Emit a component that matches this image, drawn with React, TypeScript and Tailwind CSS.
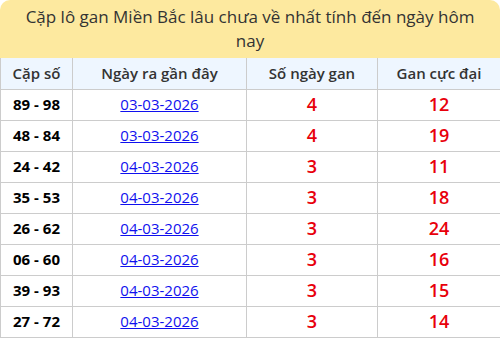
import React from "react";

const rows = [
  ["89 - 98", "03-03-2026", "4", "12"],
  ["48 - 84", "03-03-2026", "4", "19"],
  ["24 - 42", "04-03-2026", "3", "11"],
  ["35 - 53", "04-03-2026", "3", "18"],
  ["26 - 62", "04-03-2026", "3", "24"],
  ["06 - 60", "04-03-2026", "3", "16"],
  ["39 - 93", "04-03-2026", "3", "15"],
  ["27 - 72", "04-03-2026", "3", "14"],
];

export default function App() {
  return (
    <div
      className="w-[500px] h-[338px] bg-white overflow-hidden"
      style={{ fontFamily: '"Open Sans", "Noto Sans", sans-serif' }}
    >
      <div className="h-[58px] bg-[#fde99f] rounded-t-[10px] flex items-center justify-center px-4 text-center text-[17px] leading-[24px] font-medium text-[#333]">
        Cặp lô gan Miền Bắc lâu chưa về nhất tính đến ngày hôm nay
      </div>
      <table className="w-[500px] border-collapse table-fixed">
        <colgroup>
          <col className="w-[72px]" />
          <col className="w-[174px]" />
          <col className="w-[131px]" />
          <col className="w-[123px]" />
        </colgroup>
        <thead>
          <tr className="h-[31px] bg-[#eef6ff] text-[15px] font-semibold text-[#333]">
            <th className="border border-[#cccccc] border-t-0 font-semibold">Cặp số</th>
            <th className="border border-[#cccccc] border-t-0 font-semibold">Ngày ra gần đây</th>
            <th className="border border-[#cccccc] border-t-0 font-semibold">Số ngày gan</th>
            <th className="border border-[#cccccc] border-t-0 font-semibold">Gan cực đại</th>
          </tr>
        </thead>
        <tbody>
          {rows.map((r) => (
            <tr key={r[0]} className="h-[31px] text-center">
              <td className="border border-[#cccccc] text-[15px] font-bold text-black">{r[0]}</td>
              <td className="border border-[#cccccc] text-[15px]">
                <a href="#" className="text-[#1010ee] underline">{r[1]}</a>
              </td>
              <td className="border border-[#cccccc] text-[18px] font-semibold text-[#e8000b]">{r[2]}</td>
              <td className="border border-[#cccccc] text-[18px] font-semibold text-[#e8000b]">{r[3]}</td>
            </tr>
          ))}
        </tbody>
      </table>
    </div>
  );
}
